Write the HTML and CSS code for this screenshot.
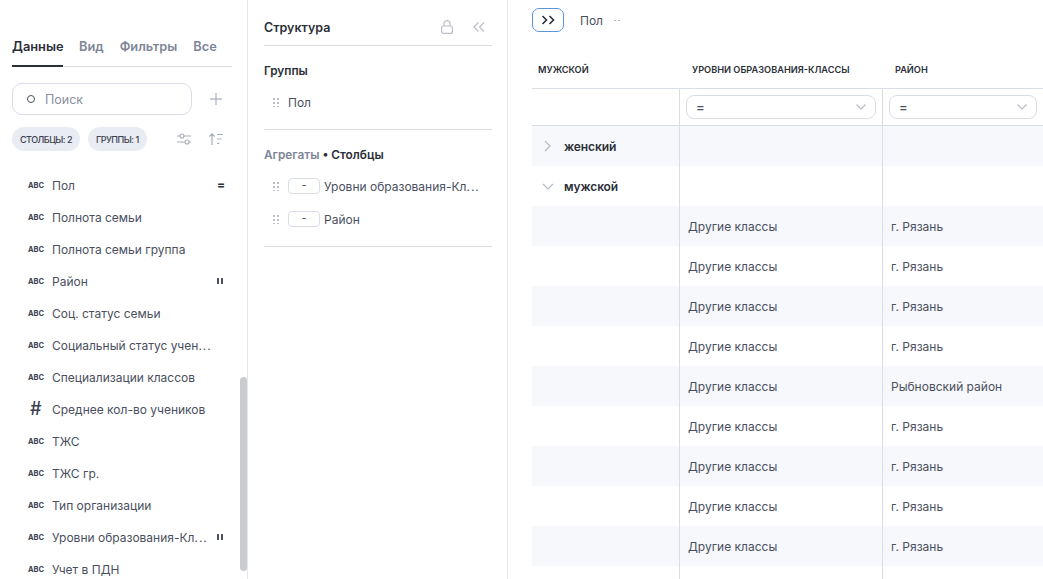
FILE: index.html
```html
<!DOCTYPE html>
<html lang="ru">
<head>
  <meta charset="UTF-8">
  <meta name="viewport" content="width=device-width, initial-scale=1.0">
  <title>Структура</title>
  <link rel="stylesheet" href="styles.css">
</head>
<body>
  <div class="app">
    <!-- левая панель -->
    <aside class="data-panel">
      <div class="tabs">
        <div class="tab active">Данные</div>
        <div class="tab">Вид</div>
        <div class="tab">Фильтры</div>
        <div class="tab">Все</div>
      </div>

      <div class="search-row">
        <div class="search">
          <span class="search-dot"></span>
          <span>Поиск</span>
        </div>
        <svg class="plus" width="12" height="12" viewBox="0 0 12 12"><path d="M6 0v12M0 6h12" stroke="#b4bac6" stroke-width="1.4" fill="none"/></svg>
      </div>

      <div class="chips-row">
        <div class="chip">СТОЛБЦЫ: 2</div>
        <div class="chip">ГРУППЫ: 1</div>
        <svg class="tune" width="16" height="14" viewBox="0 0 16 14" fill="none" stroke="#a9afbc" stroke-width="1.1">
          <path d="M1 4h3M8 4h7M1 10h8M13 10h2"/>
          <circle cx="6" cy="4" r="2"/>
          <circle cx="11" cy="10" r="2"/>
        </svg>
        <svg class="sort" width="16" height="14" viewBox="0 0 16 14" fill="none" stroke="#a9afbc" stroke-width="1.2">
          <path d="M4 13V2M1.2 4.6 4 1.8l2.8 2.8M9 2.5h6M9 7h4.5M9 11.5h2.5"/>
        </svg>
      </div>

      <div class="field-list">
        <div class="field"><span class="abc">ABC</span><span class="field-name">Пол</span><span class="mark">=</span></div>
        <div class="field"><span class="abc">ABC</span><span class="field-name">Полнота семьи</span></div>
        <div class="field"><span class="abc">ABC</span><span class="field-name">Полнота семьи группа</span></div>
        <div class="field"><span class="abc">ABC</span><span class="field-name">Район</span><span class="mark pause"></span></div>
        <div class="field"><span class="abc">ABC</span><span class="field-name">Соц. статус семьи</span></div>
        <div class="field"><span class="abc">ABC</span><span class="field-name">Социальный статус учен<span class="dots">...</span></span></div>
        <div class="field"><span class="abc">ABC</span><span class="field-name">Специализации классов</span></div>
        <div class="field"><span class="abc hash">#</span><span class="field-name">Среднее кол-во учеников</span></div>
        <div class="field"><span class="abc">ABC</span><span class="field-name">ТЖС</span></div>
        <div class="field"><span class="abc">ABC</span><span class="field-name">ТЖС гр.</span></div>
        <div class="field"><span class="abc">ABC</span><span class="field-name">Тип организации</span></div>
        <div class="field"><span class="abc">ABC</span><span class="field-name">Уровни образования-Кл<span class="dots">...</span></span><span class="mark pause"></span></div>
        <div class="field"><span class="abc">ABC</span><span class="field-name">Учет в ПДН</span></div>
      </div>
      <div class="scrollbar"></div>
    </aside>

    <!-- структура -->
    <section class="structure">
      <div class="structure-head">
        <div class="structure-title">Структура</div>
        <svg width="12" height="14" viewBox="0 0 12 14" fill="none" stroke="#b9bec9" stroke-width="1.2">
          <rect x="0.6" y="6" width="10.8" height="7.4" rx="2"/>
          <path d="M3 6V3.6a3 3 0 0 1 6 0V6"/>
        </svg>
        <svg class="collapse" width="12" height="10" viewBox="0 0 12 10" fill="none" stroke="#b9bec9" stroke-width="1.2">
          <path d="M5.5.5 1 5l4.5 4.5M11 .5 6.5 5l4.5 4.5"/>
        </svg>
      </div>

      <div class="block">
        <div class="block-title">Группы</div>
        <div class="struct-item"><span class="grip"></span><span>Пол</span></div>
      </div>

      <div class="block">
        <div class="block-title"><span class="muted">Агрегаты</span> • Столбцы</div>
        <div class="struct-item"><span class="grip"></span><span class="agg">-</span><span>Уровни образования-Кл<span class="dots">...</span></span></div>
        <div class="struct-item"><span class="grip"></span><span class="agg">-</span><span>Район</span></div>
      </div>
    </section>

    <!-- таблица -->
    <main class="content">
      <div class="toolbar">
        <button class="expand">
          <svg width="14" height="10" viewBox="0 0 14 10" fill="none" stroke="#2b2f38" stroke-width="1.6"><path d="M1.5 1 5.5 5l-4 4M8.5 1l4 4-4 4"/></svg>
        </button>
        <span class="crumb">Пол</span>
        <span class="crumb-dots"></span>
      </div>

      <div class="grid">
        <div class="row head">
          <div class="cell first">МУЖСКОЙ</div>
          <div class="cell">УРОВНИ ОБРАЗОВАНИЯ-КЛАССЫ</div>
          <div class="cell">РАЙОН</div>
        </div>
        <div class="row filters">
          <div class="cell"></div>
          <div class="cell line"><div class="select"><span>=</span><svg width="10" height="6" viewBox="0 0 10 6" fill="none" stroke="#b4bac6" stroke-width="1.1"><path d="M.5.5 5 5 9.5.5"/></svg></div></div>
          <div class="cell line"><div class="select"><span>=</span><svg width="10" height="6" viewBox="0 0 10 6" fill="none" stroke="#b4bac6" stroke-width="1.1"><path d="M.5.5 5 5 9.5.5"/></svg></div></div>
        </div>
        <div class="row shade">
          <div class="cell group"><svg width="7" height="12" viewBox="0 0 7 12" fill="none" stroke="#b4bac6" stroke-width="1.2"><path d="m1 1 5 5-5 5"/></svg><b>женский</b></div>
          <div class="cell line"></div>
          <div class="cell line"></div>
        </div>
        <div class="row">
          <div class="cell group open"><svg width="12" height="7" viewBox="0 0 12 7" fill="none" stroke="#b4bac6" stroke-width="1.2"><path d="m1 1 5 5 5-5"/></svg><b>мужской</b></div>
          <div class="cell line"></div>
          <div class="cell line"></div>
        </div>
        <div class="row shade"><div class="cell"></div><div class="cell line">Другие классы</div><div class="cell line">г. Рязань</div></div>
        <div class="row"><div class="cell"></div><div class="cell line">Другие классы</div><div class="cell line">г. Рязань</div></div>
        <div class="row shade"><div class="cell"></div><div class="cell line">Другие классы</div><div class="cell line">г. Рязань</div></div>
        <div class="row"><div class="cell"></div><div class="cell line">Другие классы</div><div class="cell line">г. Рязань</div></div>
        <div class="row shade"><div class="cell"></div><div class="cell line">Другие классы</div><div class="cell line">Рыбновский район</div></div>
        <div class="row"><div class="cell"></div><div class="cell line">Другие классы</div><div class="cell line">г. Рязань</div></div>
        <div class="row shade"><div class="cell"></div><div class="cell line">Другие классы</div><div class="cell line">г. Рязань</div></div>
        <div class="row"><div class="cell"></div><div class="cell line">Другие классы</div><div class="cell line">г. Рязань</div></div>
        <div class="row shade"><div class="cell"></div><div class="cell line">Другие классы</div><div class="cell line">г. Рязань</div></div>
        <div class="row"><div class="cell"></div><div class="cell line"></div><div class="cell line"></div></div>
      </div>
    </main>
  </div>
</body>
</html>
```

FILE: styles.css
```css
html, body {
  margin: 0;
  height: 100%;
  overflow: hidden;
}

body {
  font-family: Inter, "Noto Sans", sans-serif;
  font-size: 12px;
  color: #4a4f5e;
  background: #fff;
}

.app {
  display: flex;
  height: 579px;
}

/* левая панель */
.data-panel {
  position: relative;
  width: 248px;
  flex: none;
  box-sizing: border-box;
  border-right: 1px solid #e3e6ec;
  padding: 38px 15px 0 12px;
  overflow: hidden;
}

.tabs {
  display: flex;
  gap: 16px;
  height: 28px;
  border-bottom: 1px solid #d9dde5;
  font-size: 12.8px;
  font-weight: 600;
  color: #7d8596;
  line-height: 18px;
}

.tab {
  height: 29px;
  box-sizing: border-box;
}

.tab.active {
  color: #2b2f38;
  border-bottom: 2px solid #2b2f38;
  width: 51px;
}

.search-row {
  display: flex;
  align-items: center;
  justify-content: space-between;
  margin-top: 16px;
  padding-right: 10px;
}

.search {
  width: 180px;
  height: 32px;
  box-sizing: border-box;
  border: 1px solid #d9dde8;
  border-radius: 10px;
  display: flex;
  align-items: center;
  padding-left: 14px;
  gap: 10px;
  font-size: 12.5px;
  color: #8a909e;
}

.search-dot {
  width: 6px;
  height: 6px;
  border: 1px solid #4a4f5c;
  border-radius: 50%;
}

.chips-row {
  display: flex;
  align-items: center;
  margin-top: 12px;
  height: 24px;
}

.chip {
  height: 24px;
  line-height: 25px;
  padding: 0 8px;
  border-radius: 12px;
  background: #e9ecf3;
  font-size: 9px;
  font-weight: 500;
  color: #3c4150;
  margin-right: 8px;
  letter-spacing: -0.5px;
}

.tune {
  margin-left: 21px;
}

.sort {
  margin-left: 16px;
}

.field-list {
  margin-top: 18px;
}

.field {
  display: flex;
  align-items: center;
  height: 32px;
  padding-left: 16px;
  white-space: nowrap;
}

.abc {
  width: 24px;
  flex: none;
  font-size: 7.5px;
  font-weight: 700;
  color: #3c4150;
}

.abc.hash {
  font-size: 18px;
  font-weight: 500;
  line-height: 16px;
  padding-left: 2px;
  width: 22px;
}

.field-name {
  flex: 1;
}

.dots {
  letter-spacing: 1px;
}

.mark {
  width: 6px;
  margin-right: 9px;
  font-size: 12px;
  font-weight: 700;
  line-height: 12px;
  color: #2b2f38;
}

.mark.pause {
  height: 6px;
  box-sizing: border-box;
  border-left: 2px solid #4a4f5e;
  border-right: 2px solid #4a4f5e;
}

.scrollbar {
  position: absolute;
  right: 0;
  top: 377px;
  width: 7px;
  height: 194px;
  background: #c9cbd0;
  border-radius: 4px;
}

/* структура */
.structure {
  width: 260px;
  flex: none;
  box-sizing: border-box;
  border-right: 1px solid #e3e6ec;
  padding: 0 15px 0 16px;
}

.structure-head {
  display: flex;
  align-items: center;
  height: 36px;
  padding-top: 9px;
  border-bottom: 1px solid #d9dde5;
}

.structure-title {
  flex: 1;
  font-size: 12.5px;
  font-weight: 600;
  color: #2b2f38;
}

.collapse {
  margin-left: 20px;
  margin-right: 7px;
}

.block {
  border-bottom: 1px solid #d9dde5;
  padding: 16px 0 11px;
}

.block-title {
  font-size: 11.8px;
  font-weight: 600;
  color: #2b2f38;
  line-height: 18px;
  margin-bottom: 6px;
}

.muted {
  color: #7d8596;
}

.struct-item {
  display: flex;
  align-items: center;
  height: 32px;
  padding-left: 8px;
  gap: 6px;
  white-space: nowrap;
}

.struct-item + .struct-item {
  margin-top: 1px;
}

.grip {
  width: 7px;
  height: 10px;
  margin-right: 3px;
  background-image: radial-gradient(circle, #b9bec9 1px, transparent 1px);
  background-size: 4px 4px;
}

.agg {
  width: 32px;
  height: 16px;
  box-sizing: border-box;
  border: 1px solid #d9dde8;
  border-radius: 4px;
  text-align: center;
  line-height: 13px;
  font-size: 11px;
  margin-right: -2px;
}

/* таблица */
.content {
  flex: 1;
  min-width: 0;
  padding-left: 24px;
}

.toolbar {
  display: flex;
  align-items: center;
  height: 40px;
}

.expand {
  width: 32px;
  height: 24px;
  padding: 0;
  background: #fff;
  border: 1px solid #5b93dc;
  border-radius: 7px;
  display: flex;
  align-items: center;
  justify-content: center;
}

.crumb {
  margin-left: 16px;
}

.crumb-dots {
  width: 8px;
  height: 3px;
  margin-left: 10px;
  background-image: radial-gradient(circle, #b0b6c2 1px, transparent 1px);
  background-size: 4px 3px;
}

.row {
  display: grid;
  grid-template-columns: 147px 203px 1fr;
  height: 40px;
}

.row.shade {
  background: #f7f8fb;
}

.row.head {
  height: 48px;
  margin-top: 1px;
  border-bottom: 1px solid #d9dde5;
  font-size: 9.2px;
  font-weight: 600;
  color: #2b2f38;
  box-sizing: border-box;
}

.row.filters {
  height: 37px;
  border-bottom: 1px solid #d9dde5;
  box-sizing: border-box;
}

.cell {
  display: flex;
  align-items: center;
  padding-left: 8px;
  white-space: nowrap;
  min-width: 0;
}

.head .cell {
  padding-left: 13px;
  padding-top: 10px;
}

.head .first {
  padding-left: 6px;
}

.cell.line {
  border-left: 1px solid #d9dde5;
  box-sizing: border-box;
}

.row:not(.filters):not(.head) .cell.line {
  padding-top: 1px;
}

.filters .cell.line {
  padding: 0 6px;
}

.select {
  flex: 1;
  height: 24px;
  box-sizing: border-box;
  border: 1px solid #d9dde8;
  border-radius: 8px;
  display: flex;
  align-items: center;
  justify-content: space-between;
  padding: 0 9px;
  font-size: 13px;
  font-weight: 500;
}

.group {
  gap: 13px;
  padding-left: 12px;
}

.group.open {
  gap: 10px;
  padding-left: 10px;
}

.group b {
  font-size: 12px;
  font-weight: 600;
  letter-spacing: -0.1px;
  color: #2b2f38;
}
```
